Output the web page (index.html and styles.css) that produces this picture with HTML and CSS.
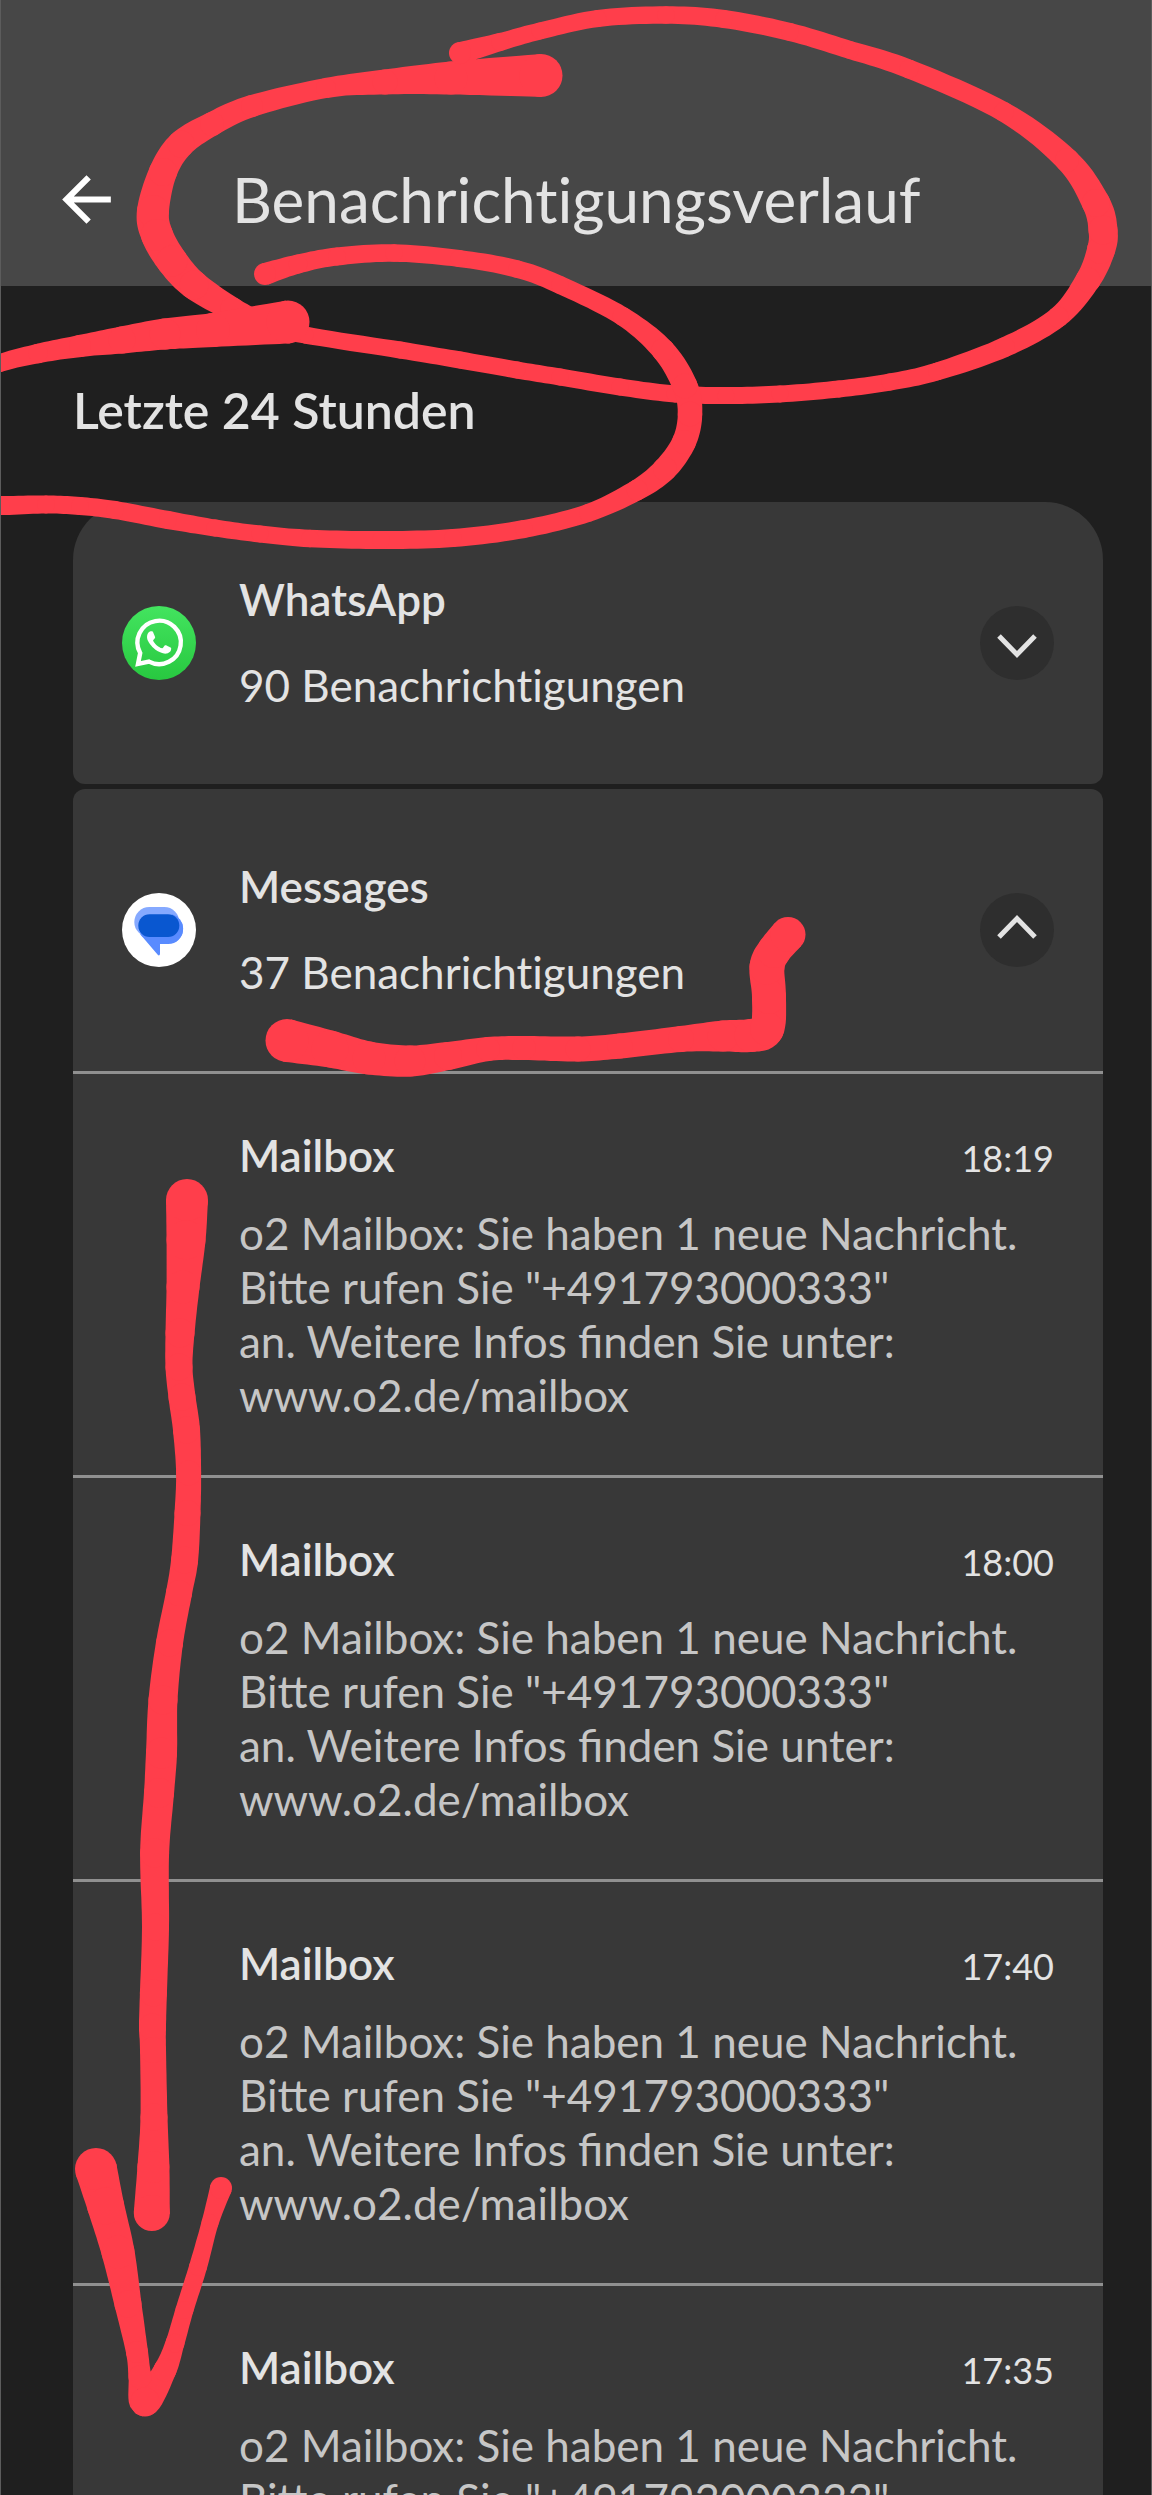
FILE: index.html
```html
<!DOCTYPE html>
<html lang="de">
<head>
<meta charset="utf-8">
<meta name="viewport" content="width=device-width, initial-scale=1">
<title>Benachrichtigungsverlauf</title>
<link rel="stylesheet" href="styles.css">
</head>
<body>
<div class="app">
  <header class="topbar">
    <button class="back" type="button" aria-label="Zurück">
      <svg viewBox="0 0 24 24" aria-hidden="true"><path d="M20 11H7.83l5.59-5.59L12 4l-8 8 8 8 1.41-1.41L7.83 13H20v-2z"/></svg>
    </button>
    <h1 class="title">Benachrichtigungsverlauf</h1>
  </header>

  <main class="content">
    <h2 class="section-title">Letzte 24 Stunden</h2>

    <section class="card card-first">
      <div class="group">
        <svg class="app-icon" viewBox="0 0 74 74" aria-hidden="true">
          <defs><linearGradient id="wa" x1="0" y1="0" x2="0" y2="1"><stop offset="0" stop-color="#43e45f"/><stop offset="1" stop-color="#28c840"/></linearGradient></defs>
          <circle cx="37" cy="37" r="37" fill="url(#wa)"/>
          <path d="M16 58 L18.2 47 A21.7 21.7 0 1 1 27 55.6 Z" fill="none" stroke="#fff" stroke-width="4.4"/>
          <path transform="translate(13 12.5) scale(2)" fill="#fff" d="M17.472 14.382c-.297-.149-1.758-.867-2.03-.967-.273-.099-.471-.148-.67.15-.197.297-.767.966-.94 1.164-.173.199-.347.223-.644.075-.297-.15-1.255-.463-2.39-1.475-.883-.788-1.48-1.761-1.653-2.059-.173-.297-.018-.458.13-.606.134-.133.298-.347.446-.52.149-.174.198-.298.298-.497.099-.198.05-.371-.025-.52-.075-.149-.669-1.612-.916-2.207-.242-.579-.487-.5-.669-.51-.173-.008-.371-.01-.57-.01-.198 0-.52.074-.792.372-.272.297-1.04 1.016-1.04 2.479 0 1.462 1.065 2.875 1.213 3.074.149.198 2.096 3.2 5.077 4.487.709.306 1.262.489 1.694.625.712.227 1.36.195 1.871.118.571-.085 1.758-.719 2.006-1.413.248-.694.248-1.289.173-1.413-.074-.124-.272-.198-.57-.347z"/>
        </svg>
        <div class="group-text">
          <h3 class="name">WhatsApp</h3>
          <p class="count">90 Benachrichtigungen</p>
        </div>
        <button class="toggle" type="button" aria-expanded="false" aria-label="WhatsApp ausklappen">
          <svg viewBox="0 0 74 74" aria-hidden="true"><path d="M19 30 37 48.500 55 30"/></svg>
        </button>
      </div>
    </section>

    <section class="card">
      <div class="group">
        <svg class="app-icon" viewBox="0 0 74 74" aria-hidden="true">
          <circle cx="37" cy="37" r="37" fill="#fff"/>
          <path fill="#598bff" d="M28 21.300H46.200A14.800 14.800 0 0 1 46.200 51H38V61Q37.500 63.500 35.500 61.500L18 41Z"/>
          <rect x="12.300" y="14" width="45" height="30" rx="15" fill="#85a9ff"/>
          <path fill="#598bff" d="M50 21.300A14.800 14.800 0 0 1 50 50L46 44Z"/>
          <path fill="#598bff" d="M16.500 35 20 43.500 30 47 30 38Z"/>
          <rect x="16.300" y="21.300" width="41" height="22.700" rx="11.300" fill="#0957d0"/>
        </svg>
        <div class="group-text">
          <h3 class="name">Messages</h3>
          <p class="count">37 Benachrichtigungen</p>
        </div>
        <button class="toggle" type="button" aria-expanded="true" aria-label="Messages einklappen">
          <svg viewBox="0 0 74 74" aria-hidden="true"><path d="M19 44 37 25.500 55 44"/></svg>
        </button>
      </div>

      <ul class="list">
        <li class="item">
          <div class="item-head"><h4 class="name">Mailbox</h4><time class="time">18:19</time></div>
          <p class="body">o2 Mailbox: Sie haben 1 neue Nachricht.<br>Bitte rufen Sie "+491793000333"<br>an. Weitere Infos finden Sie unter:<br>www.o2.de/mailbox</p>
        </li>
        <li class="item">
          <div class="item-head"><h4 class="name">Mailbox</h4><time class="time">18:00</time></div>
          <p class="body">o2 Mailbox: Sie haben 1 neue Nachricht.<br>Bitte rufen Sie "+491793000333"<br>an. Weitere Infos finden Sie unter:<br>www.o2.de/mailbox</p>
        </li>
        <li class="item">
          <div class="item-head"><h4 class="name">Mailbox</h4><time class="time">17:40</time></div>
          <p class="body">o2 Mailbox: Sie haben 1 neue Nachricht.<br>Bitte rufen Sie "+491793000333"<br>an. Weitere Infos finden Sie unter:<br>www.o2.de/mailbox</p>
        </li>
        <li class="item">
          <div class="item-head"><h4 class="name">Mailbox</h4><time class="time">17:35</time></div>
          <p class="body">o2 Mailbox: Sie haben 1 neue Nachricht.<br>Bitte rufen Sie "+491793000333"<br>an. Weitere Infos finden Sie unter:<br>www.o2.de/mailbox</p>
        </li>
      </ul>
    </section>
  </main>

  <svg class="ink" viewBox="0 0 1152 2495" aria-hidden="true"></svg>
</div>
<script src="ink.js"></script>
</body>
</html>
```
FILE: styles.css
```css
* { box-sizing: border-box; }

body {
  margin: 0;
  background: #1f1f1f;
  color: #e3e3e3;
  font-family: Lato, Roboto, "Liberation Sans", sans-serif;
}

h1, h2, h3, h4, p, ul { margin: 0; padding: 0; }

button {
  padding: 0;
  border: 0;
  background: none;
  color: inherit;
  cursor: pointer;
}

svg { display: block; }

.app {
  position: relative;
  height: 100vh;
  overflow: hidden;
  border: solid #5c5c5c;
  border-width: 0 1px;
}

.topbar {
  display: flex;
  align-items: center;
  gap: 109px;
  padding: 163px 49px 50px;
  background: #474747;
}

.back { flex: none; width: 73px; height: 73px; }
.back svg { width: 100%; fill: #fff; }

.title {
  font-size: 62px;
  line-height: 73px;
  font-weight: 400;
  font-variant-ligatures: none;
}

.content { padding: 94px 48px 0 72px; }

.section-title {
  margin-bottom: 62px;
  font-size: 50px;
  line-height: 60px;
  font-weight: 600;
}

.card {
  margin-top: 5px;
  border-radius: 12px;
  background: #383838;
}

.card-first {
  margin-top: 0;
  border-radius: 58px 58px 12px 12px;
}

.group {
  display: flex;
  align-items: center;
  gap: 43px;
  min-height: 282px;
  padding: 0 49px;
}

.app-icon { flex: none; width: 74px; height: 74px; }

.group-text {
  flex: 1;
  display: grid;
  gap: 34px;
  padding-bottom: 2px;
}

.name {
  font-size: 44px;
  line-height: 52px;
  font-weight: 600;
}

.count {
  font-size: 44px;
  line-height: 52px;
  font-variant-ligatures: none;
}

.toggle {
  flex: none;
  width: 74px;
  height: 74px;
  border-radius: 50%;
  background: #2e2e2e;
}

.toggle path {
  fill: none;
  stroke: #e3e3e3;
  stroke-width: 5;
}

.list { list-style: none; }

.item {
  padding: 55px 49px 53px 166px;
  border-top: 3px solid #909090;
}

.item-head {
  display: flex;
  justify-content: space-between;
  align-items: baseline;
  margin-bottom: 25px;
}

.time { font-size: 36px; line-height: 44px; }

.body {
  color: #c6c6c6;
  font-size: 44px;
  line-height: 54px;
}

/* Pen markup drawn over the screen */
.ink {
  position: absolute;
  top: 0;
  left: -1px;
  width: calc(100% + 2px);
  fill: #ff3e4b;
  pointer-events: none;
}
```
FILE: ink.js
```
// Each stroke is a list of pen samples: x, y, nib width.
const strokes = [
  [[541,75.5,43],[451,78,33],[385,82,25],[326,88,20],[252,106,22],[212,124,24],[181,144,27],[163,172,28],[153,211,32],[157,235,32],[172,261,31],[194,285,29],[232,309,24],[265,324,20],[305,335,17],[400,350,17],[460,360,17],[517,370,17],[560,377,17],[620,387,17],[675,394,17],[726,395.5,17],[780,394,17],[839,389,17],[890,382,17],[937,371.5,18],[1005,347,20],[1058,317,21],[1088,280,25],[1101,250,28],[1103,230,29],[1096,203,28],[1067,160,24],[1004,112,20],[909,69,19],[850,50,18],[790,32,18],[724,19,18],[666,15,17.5],[598,18.5,17],[540,31,17],[500,42,18],[460,53,22]],
  [[288,322,43],[213,330,34],[165,334,31],[122,340,27],[80,346,22],[38,353.5,19.5],[0,363,18],[-40,378,18],[-70,420,18],[-70,470,18],[-40,504,18],[0,505.5,19],[46,504.5,18],[80,506,18],[115,510,18],[168,520,18],[215,528,17],[260,534,17],[310,538.5,17.5],[381,540,18],[453,538,18],[524,529,18],[588,513,18],[637,490,21],[665,469,24],[684,442,24],[690,414,24.5],[685,386,25],[663,350,23],[622,316,19],[560,285,18],[517,269,17.5],[459,258.5,17],[394,253,17.5],[337,256.5,18],[298,264,19],[265,274,22]],
  [[287,1040.5,43],[330,1049,37],[369,1058,33],[410,1061,31],[448,1056,28],[488,1049,24],[524,1048,24],[578,1049,25],[620,1046,25],[681,1039,26],[723,1036,31],[751,1035.5,33],[767,1029,34],[769,997,34],[767,967,35],[774,951,34],[788,934.5,35]],
  [[187,1200,42],[186,1240,39],[183,1287,33],[180,1333,29],[179,1367,27],[182,1397,27],[186.5,1430,27],[188.6,1473,25],[187.5,1513,26],[184.6,1560,27],[179,1593,26],[169.5,1643,27],[163,1700,29],[161.5,1753,31],[159,1793,30],[154.6,1853,29],[155.5,1927,27],[153.4,1993,27],[152.5,2027,27],[153,2050,26],[154,2117,27],[153.4,2167,32],[151.8,2213,36]],
  [[96,2169,42],[105.7,2206,37],[118,2252,33],[128,2304,27],[137,2352,22],[140,2377,23],[145,2402,29],[165,2370,23],[175,2343,19],[184.5,2310,18],[198,2267,18],[210,2223,17],[221,2188,22]]
];

const spline = (a, b, c, d, t) =>
  0.5 * (2 * b + (c - a) * t + (2 * a - 5 * b + 4 * c - d) * t * t + (3 * b - a - 3 * c + d) * t * t * t);

function ribbon(points) {
  const samples = [];
  for (let i = 0; i < points.length - 1; i++) {
    const q = [points[Math.max(i - 1, 0)], points[i], points[i + 1], points[Math.min(i + 2, points.length - 1)]];
    for (let t = 0; t < 1; t += 0.1) {
      samples.push([0, 1, 2].map(k => spline(q[0][k], q[1][k], q[2][k], q[3][k], t)));
    }
  }
  samples.push(points[points.length - 1]);
  const left = [], right = [];
  samples.forEach(([x, y, w], i) => {
    const p = samples[Math.max(i - 1, 0)], n = samples[Math.min(i + 1, samples.length - 1)];
    const len = Math.hypot(n[0] - p[0], n[1] - p[1]) || 1;
    const dx = -(n[1] - p[1]) / len * w / 2, dy = (n[0] - p[0]) / len * w / 2;
    left.push((x + dx).toFixed(1) + " " + (y + dy).toFixed(1));
    right.unshift((x - dx).toFixed(1) + " " + (y - dy).toFixed(1));
  });
  return "M" + left.concat(right).join("L") + "Z";
}

const ink = document.querySelector(".ink");
const add = (tag, attrs) => {
  const el = document.createElementNS("http://www.w3.org/2000/svg", tag);
  for (const key in attrs) el.setAttribute(key, attrs[key]);
  ink.append(el);
};

for (const stroke of strokes) {
  add("path", { d: ribbon(stroke) });
  for (const [x, y, w] of stroke) add("circle", { cx: x, cy: y, r: w / 2 });
}
```
